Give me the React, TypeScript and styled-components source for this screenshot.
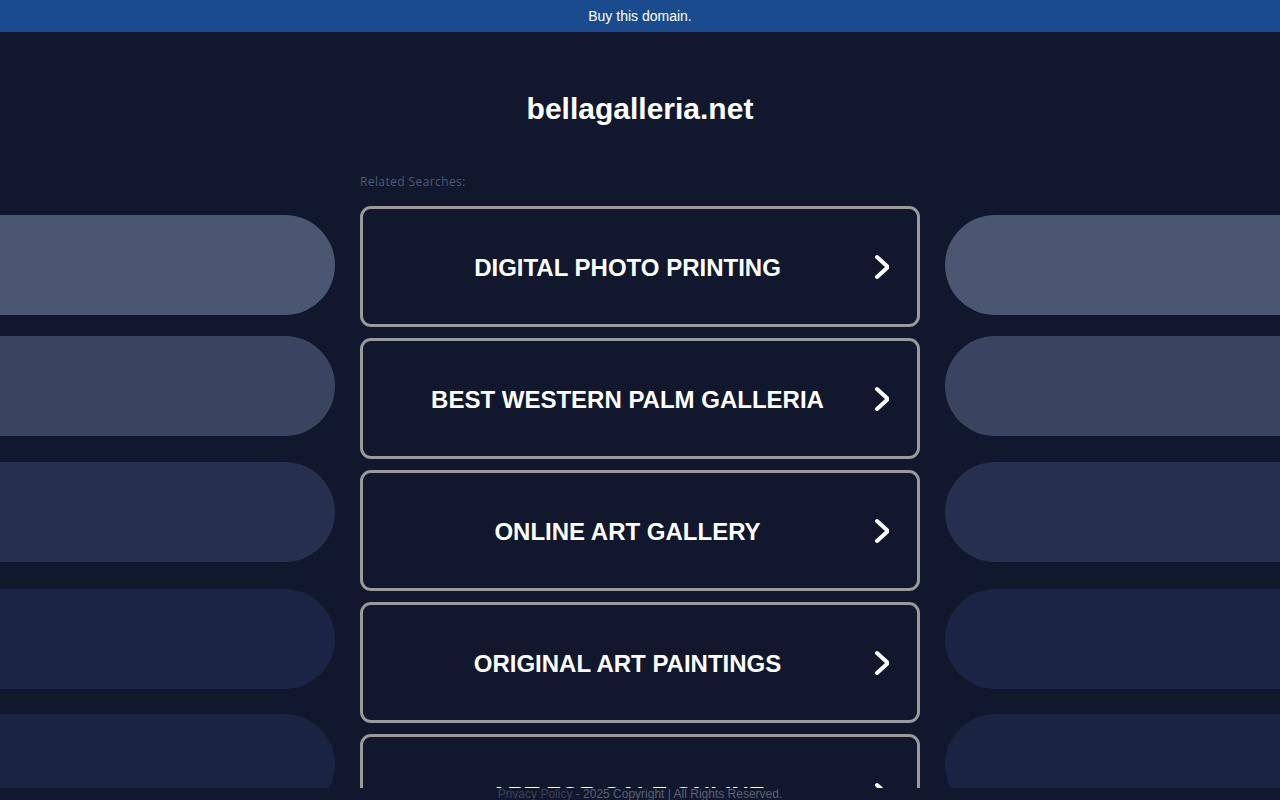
import styled, { createGlobalStyle } from "styled-components";

const GlobalStyle = createGlobalStyle`
  html, body {
    margin: 0;
    padding: 0;
    background: #11172c;
    font-family: "Liberation Sans", Arial, sans-serif;
    overflow: hidden;
  }
  * {
    box-sizing: border-box;
  }
`

const Page = styled.div`
  display: flex;
  flex-direction: column;
  height: 100vh;
  background: #11172c;
`

const TopBar = styled.div`
  height: 32px;
  flex-shrink: 0;
  display: flex;
  align-items: center;
  justify-content: center;
  background: #1b4b8f;
  color: #ffffff;
  font-size: 14px;
`

const Main = styled.main`
  flex: 1;
  overflow: hidden;
`

const Title = styled.h1`
  margin: 59px 0 0;
  text-align: center;
  color: #ffffff;
  font-size: 30px;
  line-height: 36px;
  font-weight: 700;
`

const Columns = styled.div`
  display: grid;
  grid-template-columns: 1fr 560px 1fr;
  column-gap: 25px;
  margin-top: 47px;
`

const Side = styled.div`
  display: flex;
  flex-direction: column;
  padding-top: 41px;
`

const Pill = styled.div<{ $color: string; $side: "left" | "right"; $top: number }>`
  height: 100px;
  margin-top: ${(p) => p.$top}px;
  background: ${(p) => p.$color};
  border-radius: ${(p) => (p.$side === "left" ? "0 50px 50px 0" : "50px 0 0 50px")};
`

const Center = styled.div`
  display: flex;
  flex-direction: column;
`

const Label = styled.div`
  font-family: "Open Sans", "Noto Sans", sans-serif;
  font-size: 12px;
  letter-spacing: 0.4px;
  line-height: 16px;
  color: #4e5a79;
  margin-bottom: 16px;
`

const CardList = styled.div`
  display: flex;
  flex-direction: column;
  gap: 11px;
`

const Card = styled.a`
  height: 121px;
  display: flex;
  align-items: center;
  padding: 0 28px 0 25px;
  border: 3px solid #9a9a9a;
  border-radius: 11px;
  background: #11172c;
  color: #ffffff;
  text-decoration: none;
`

const CardText = styled.span`
  flex: 1;
  padding-top: 2px;
  text-align: center;
  font-size: 24px;
  font-weight: 700;
  text-transform: uppercase;
`

const Chevron = styled.svg`
  width: 22px;
  height: 26px;
  flex-shrink: 0;
`

const Footer = styled.footer`
  height: 12px;
  flex-shrink: 0;
  text-align: center;
  font-size: 12px;
  line-height: 12px;
  color: #596079;
  white-space: nowrap;
  overflow: hidden;
`

const FooterLink = styled.span`
  color: #3a4259;
`

const pills = [
  { color: "#4b5672", top: 0 },
  { color: "#3a4461", top: 21 },
  { color: "#262f4d", top: 26 },
  { color: "#1b2444", top: 27 },
  { color: "#1b2343", top: 25 },
]

const searches = [
  "Digital Photo Printing",
  "Best Western Palm Galleria",
  "Online Art Gallery",
  "Original Art Paintings",
  "Art For Sale Online",
]

const SidePills = ({ side }: { side: "left" | "right" }) => (
  <Side>
    {pills.map((p, i) => (
      <Pill key={i} $color={p.color} $side={side} $top={p.top} />
    ))}
  </Side>
)

export default function App() {
  return (
    <Page>
      <GlobalStyle />
      <TopBar>Buy this domain.</TopBar>
      <Main>
        <Title>bellagalleria.net</Title>
        <Columns>
          <SidePills side="left" />
          <Center>
            <Label>Related Searches:</Label>
            <CardList>
              {searches.map((s) => (
                <Card key={s} href="#">
                  <CardText>{s}</CardText>
                  <Chevron viewBox="0 0 22 26">
                    <path
                      d="M10 3 L21 13 L10 23"
                      fill="none"
                      stroke="#ffffff"
                      strokeWidth="4"
                      strokeLinecap="round"
                      strokeLinejoin="round"
                    />
                  </Chevron>
                </Card>
              ))}
            </CardList>
          </Center>
          <SidePills side="right" />
        </Columns>
      </Main>
      <Footer>
        <FooterLink>Privacy Policy</FooterLink> - 2025 Copyright | All Rights Reserved.
      </Footer>
    </Page>
  )
}
